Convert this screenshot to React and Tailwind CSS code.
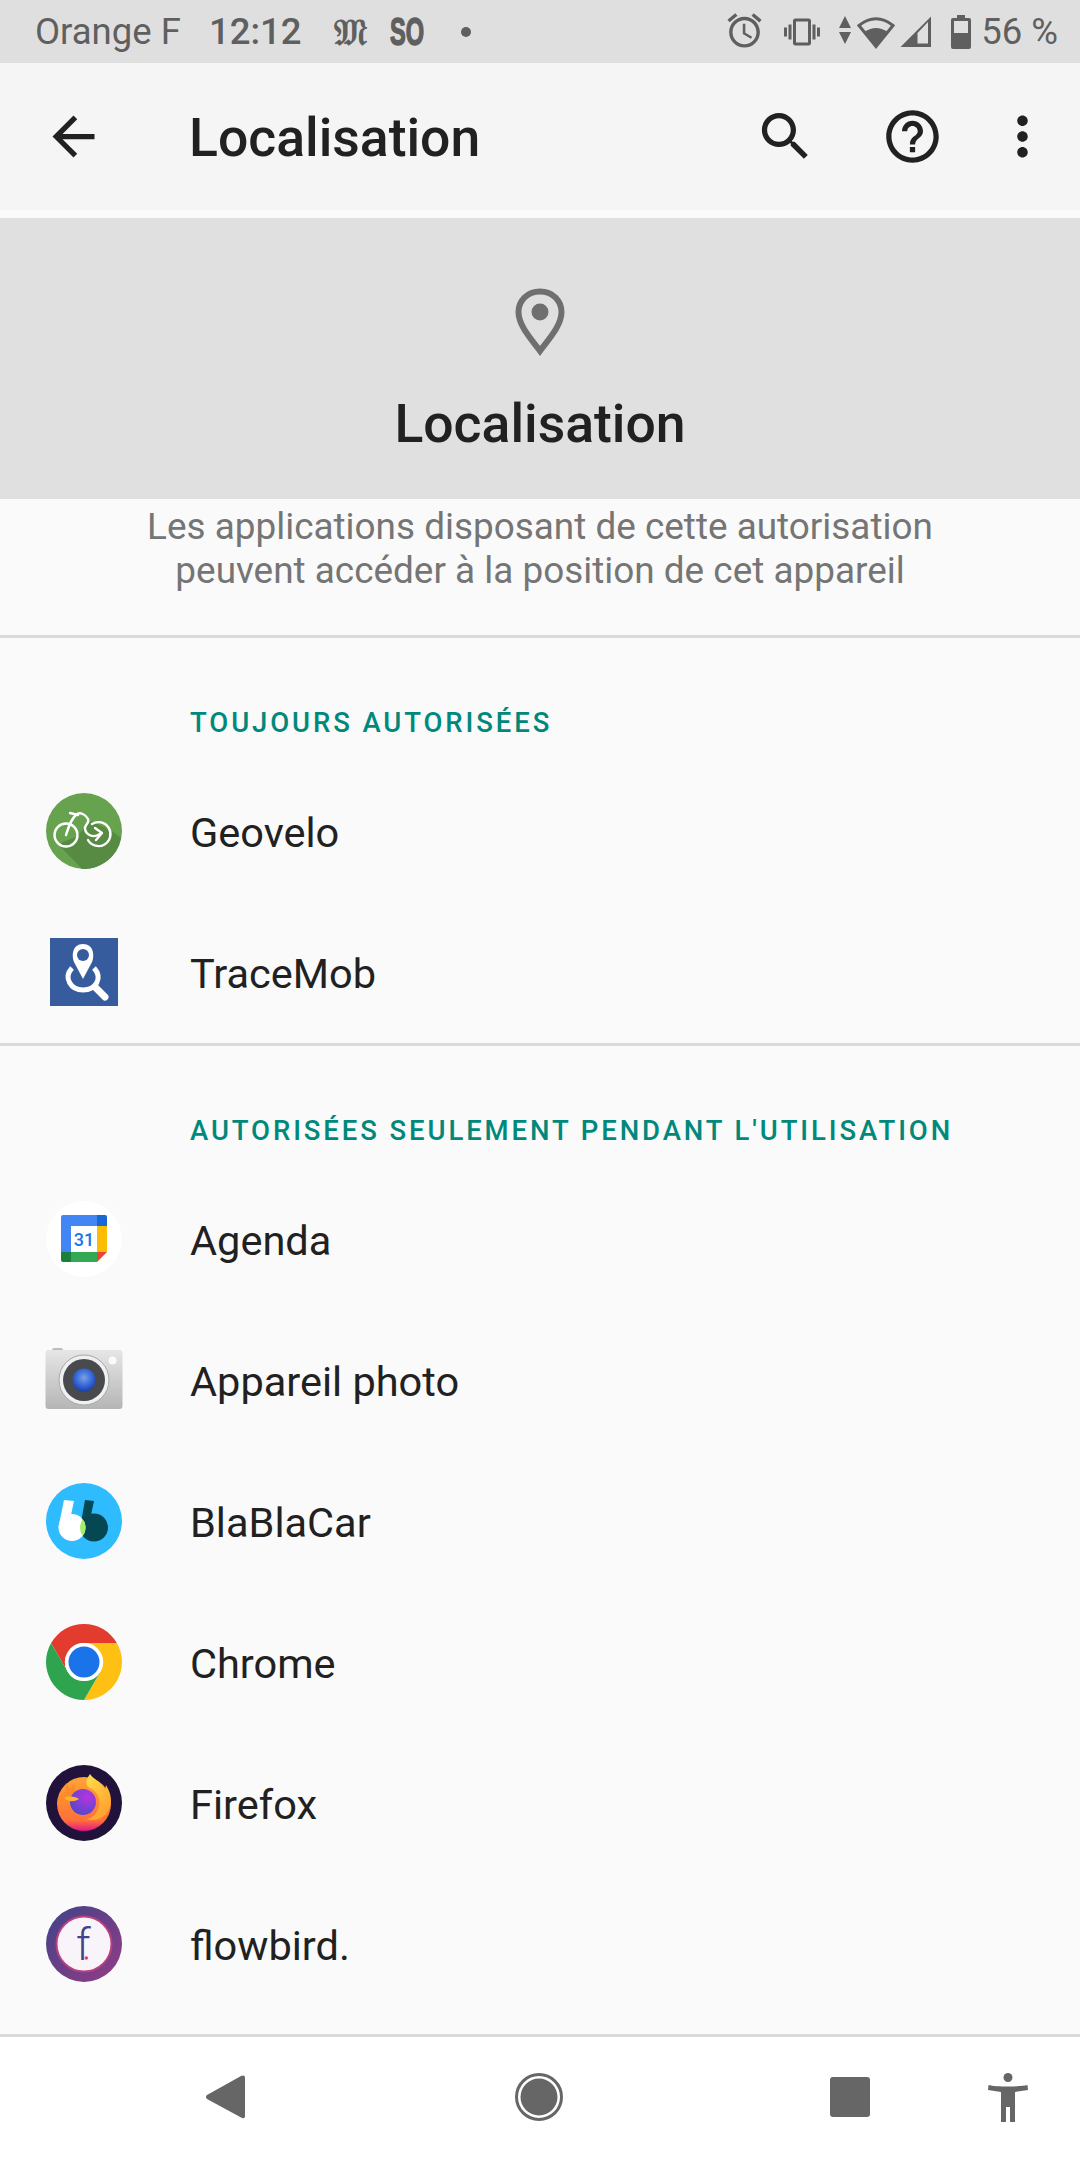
function MaterialIcon({ d, size = 63, className = '', fill = '#212121' }) {
  return (
    <svg width={size} height={size} viewBox="0 0 24 24" fill={fill} className={className}>
      <path d={d} />
    </svg>
  );
}

function StatusBar() {
  return (
    <div className="h-[63px] bg-[#dfdfdf] flex items-center text-[#5f5f5f] pl-[35px] pr-[22px]">
      <span className="text-[36.500px] leading-none w-[174px] pt-[2px]">Orange F</span>
      <span className="text-[36.500px] leading-none w-[125px] pt-[2px] font-medium">12:12</span>
      <span className="text-[36px] leading-none w-[56px] font-bold font-['DejaVu_Serif',serif]">𝔐</span>
      <span className="w-[71px] h-[38px] leading-[38px]">
        <span className="inline-block origin-left scale-x-[0.62] text-[38px] font-black [-webkit-text-stroke:1.500px_#5f5f5f] font-['Liberation_Sans',sans-serif]">SO</span>
      </span>
      <span className="w-[10px] h-[10px] rounded-full bg-[#5f5f5f]" />
      <div className="flex-1" />
      <MaterialIcon
        size={41}
        fill="#5f5f5f"
        className="mr-[19px] -mt-[2px]"
        d="M22 5.720l-4.600-3.860-1.290 1.530 4.600 3.860L22 5.720zM7.880 3.390L6.600 1.860 2 5.710l1.290 1.530 4.590-3.850zM12.500 8H11v6l4.750 2.850.75-1.230-4-2.370V8zM12 4c-4.970 0-9 4.030-9 9s4.030 9 9 9c4.970 0 9-4.030 9-9s-4.030-9-9-9zm0 16c-3.870 0-7-3.130-7-7s3.130-7 7-7 7 3.130 7 7-3.130 7-7 7z"
      />
      <MaterialIcon
        size={36}
        fill="#5f5f5f"
        className="mr-[19px]"
        d="M0 15h2V9H0v6zm3 2h2V7H3v10zm19-8v6h2V9h-2zm-3 8h2V7h-2v10zM16.500 3h-9C6.670 3 6 3.670 6 4.500v15c0 .83.67 1.500 1.500 1.500h9c.83 0 1.500-.67 1.500-1.500v-15c0-.83-.67-1.500-1.500-1.500zM16 19H8V5h8v14z"
      />
      <svg width="12" height="28" viewBox="0 0 12 28" className="mr-[6px] -mt-[4px]" fill="#5f5f5f">
        <path d="M6 0l6 12H0zM0 16h12L6 28z" />
      </svg>
      <svg width="38" height="34" viewBox="0 0 38 34" className="mr-[4px]">
        <path d="M19 31.500L2 10.500Q19 -3 36 10.500Z" fill="none" stroke="#5f5f5f" strokeWidth="3" />
        <path d="M19 32L7.500 17Q19 9 30.500 17Z" fill="#5f5f5f" />
      </svg>
      <svg width="33" height="33" viewBox="0 0 33 33" className="mr-[19px]" fill="#5f5f5f">
        <path d="M32 1.500V32H1.500Z" />
        <path d="M18.500 18V28.500H29V7Z" fill="#dfdfdf" />
      </svg>
      <svg width="20" height="34" viewBox="0 0 20 34" className="mr-[10px]">
        <path d="M6 0h8v3h4a2 2 0 0 1 2 2v27a2 2 0 0 1-2 2H2a2 2 0 0 1-2-2V5a2 2 0 0 1 2-2h4z" fill="#5f5f5f" />
        <rect x="3" y="6" width="14" height="12" fill="#dfdfdf" />
      </svg>
      <span className="text-[36.500px] leading-none pt-[2px]">56 %</span>
    </div>
  );
}

function AppBar() {
  return (
    <div className="h-[147px] bg-[#f5f5f5] flex items-center text-[#212121] pl-[42px] pr-[26px]">
      <MaterialIcon d="M20 11H7.830l5.590-5.590L12 4l-8 8 8 8 1.410-1.410L7.830 13H20v-2z" />
      <h1 className="ml-[84px] pt-[3px] text-[53.500px] font-medium leading-none">Localisation</h1>
      <div className="flex-1" />
      <MaterialIcon
        className="mr-[64px]"
        d="M15.500 14h-.79l-.28-.27C15.410 12.590 16 11.110 16 9.500 16 5.910 13.090 3 9.500 3S3 5.910 3 9.500 5.910 16 9.500 16c1.610 0 3.090-.59 4.230-1.570l.27.28v.79l5 4.990L20.490 19l-4.990-5zm-6 0C7.010 14 5 11.990 5 9.500S7.010 5 9.500 5 14 7.010 14 9.500 11.990 14 9.500 14z"
      />
      <MaterialIcon
        className="mr-[47px]"
        d="M11 18h2v-2h-2v2zm1-16C6.480 2 2 6.480 2 12s4.480 10 10 10 10-4.480 10-10S17.520 2 12 2zm0 18c-4.410 0-8-3.590-8-8s3.590-8 8-8 8 3.590 8 8-3.590 8-8 8zm0-14c-2.210 0-4 1.790-4 4h2c0-1.100.9-2 2-2s2 .9 2 2c0 2-3 1.750-3 5h2c0-2.250 3-2.500 3-5 0-2.210-1.790-4-4-4z"
      />
      <MaterialIcon d="M12 8c1.100 0 2-.9 2-2s-.9-2-2-2-2 .9-2 2 .9 2 2 2zm0 2c-1.100 0-2 .9-2 2s.9 2 2 2 2-.9 2-2-.9-2-2-2zm0 6c-1.100 0-2 .9-2 2s.9 2 2 2 2-.9 2-2-.9-2-2-2z" />
    </div>
  );
}

function Geovelo() {
  return (
    <svg width="76" height="76" viewBox="0 0 76 76">
      <circle cx="38" cy="38" r="38" fill="#67a34e" />
      <path d="M12 51L30 44L45 28L66 38L75 45A38 38 0 0 1 36 76Z" fill="#578a42" />
      <g fill="none" stroke="#fff" strokeWidth="2.400" strokeLinecap="round" strokeLinejoin="round">
        <circle cx="20" cy="42" r="11.500" />
        <path d="M46 31A12 12 0 1 1 42 47" />
        <path d="M20 42C23 33 25 26 30 22C34 18 40 22 42 26C44 30 38 32 39 36C40 41 46 46 54 41" />
        <path d="M24 20L32 22" />
        <path d="M49 35L56 40L50 47" />
      </g>
    </svg>
  );
}

function TraceMob() {
  return (
    <svg width="68" height="68" viewBox="0 0 68 68">
      <rect width="68" height="68" fill="#365c9e" />
      <path d="M33 6C22 6 21.500 18 24 24L33 41L42 24C44.500 18 44 6 33 6Z" fill="#fff" />
      <circle cx="33" cy="17" r="6" fill="#365c9e" />
      <path d="M22 30C13 40 21 52 33 52C46 52 53 40 44 30" fill="none" stroke="#fff" strokeWidth="5" />
      <path d="M46 50L55 59" stroke="#fff" strokeWidth="7" strokeLinecap="round" />
    </svg>
  );
}

function Agenda() {
  return (
    <svg width="76" height="76" viewBox="0 0 76 76">
      <circle cx="38" cy="38" r="38" fill="#fff" />
      <path d="M17 14H51V25H25V51H15V16a2 2 0 0 1 2-2Z" fill="#4285f4" />
      <path d="M51 14H59a2 2 0 0 1 2 2V25H51Z" fill="#1967d2" />
      <rect x="51" y="25" width="10" height="26" fill="#fbbc04" />
      <rect x="25" y="51" width="26" height="10" fill="#34a853" />
      <path d="M15 51H25V61H17a2 2 0 0 1-2-2Z" fill="#188038" />
      <path d="M51 51H61L51 61Z" fill="#ea4335" />
      <text x="38" y="44.500" textAnchor="middle" fontSize="18" fontWeight="500" fill="#1a73e8" fontFamily="Roboto, sans-serif">31</text>
    </svg>
  );
}

function Camera() {
  return (
    <svg width="78" height="62" viewBox="0 0 78 62" className="-mt-[2px]">
      <defs>
        <linearGradient id="camBody" x1="0" y1="0" x2="0" y2="1">
          <stop offset="0" stopColor="#e6e6e6" />
          <stop offset="1" stopColor="#b5b5b5" />
        </linearGradient>
        <radialGradient id="camLens" cx="0.500" cy="0.400" r="0.600">
          <stop offset="0" stopColor="#7f9fe0" />
          <stop offset="0.500" stopColor="#3f71dd" />
          <stop offset="1" stopColor="#1c3fae" />
        </radialGradient>
      </defs>
      <rect x="7" y="0" width="11" height="5" rx="2" fill="#bdbdbd" />
      <rect x="0.500" y="2" width="77" height="59" rx="3" fill="url(#camBody)" />
      <circle cx="39" cy="32" r="25" fill="#f0f0f0" stroke="#a8a8a8" strokeWidth="1" />
      <circle cx="39" cy="32" r="21" fill="#484a4d" />
      <circle cx="39" cy="32" r="11.500" fill="url(#camLens)" />
      <circle cx="67.500" cy="12.500" r="4" fill="#fafafa" />
    </svg>
  );
}

function BlaBlaCar() {
  return (
    <svg width="76" height="76" viewBox="0 0 76 76">
      <defs>
        <clipPath id="blaLeft">
          <circle cx="26" cy="44.500" r="13.500" />
        </clipPath>
      </defs>
      <circle cx="38" cy="38" r="38" fill="#2ebcff" />
      <circle cx="48" cy="44.500" r="14" fill="#054752" />
      <path d="M39 17L48 18L45 32L34.500 42Z" fill="#054752" />
      <circle cx="26" cy="44.500" r="13.500" fill="#fff" />
      <path d="M18 17L28 18L25 32L12.500 44Z" fill="#fff" />
      <circle cx="48" cy="44.500" r="14" fill="#a5ed6d" clipPath="url(#blaLeft)" />
    </svg>
  );
}

function Chrome() {
  return (
    <svg width="76" height="76" viewBox="0 0 76 76">
      <path d="M5.100 19A38 38 0 0 1 70.900 19H38A19 19 0 0 0 21.500 47.500Z" fill="#e33b2e" />
      <path d="M70.900 19A38 38 0 0 1 38 76L54.500 47.500A19 19 0 0 0 38 19Z" fill="#fdc013" />
      <path d="M5.100 19A38 38 0 0 0 38 76L54.500 47.500A19 19 0 0 1 21.500 47.500Z" fill="#2ea44f" />
      <circle cx="38" cy="38" r="19" fill="#fff" />
      <circle cx="38" cy="38" r="15.500" fill="#1a73e8" />
    </svg>
  );
}

function Firefox() {
  return (
    <svg width="76" height="76" viewBox="0 0 76 76">
      <defs>
        <linearGradient id="foxBody" x1="0.500" y1="0" x2="0.500" y2="1">
          <stop offset="0" stopColor="#ffa436" />
          <stop offset="0.800" stopColor="#ff7139" />
          <stop offset="1" stopColor="#e31587" />
        </linearGradient>
        <linearGradient id="foxTail" x1="0" y1="0" x2="0.600" y2="1">
          <stop offset="0" stopColor="#ffe04a" />
          <stop offset="1" stopColor="#ffa02e" />
        </linearGradient>
        <radialGradient id="foxGlobe" cx="0.650" cy="0.300" r="0.800">
          <stop offset="0" stopColor="#b833e1" />
          <stop offset="1" stopColor="#4a4bc8" />
        </radialGradient>
      </defs>
      <circle cx="38" cy="38" r="38" fill="#20123a" />
      <circle cx="38" cy="39" r="27" fill="url(#foxBody)" />
      <path d="M20 18L19 27C14 30 11 36 11 40L24 36L32 26C28 25 28 22 28 19L24 24Z" fill="#ff8a2b" />
      <circle cx="37" cy="37" r="13" fill="url(#foxGlobe)" />
      <path d="M44 9C38 17 40 22 46 24C54 29 56 40 50 48C47 53 42 54 40 54C52 58 65 50 65 36C65 28 62 24 60 20L59 25C57 18 48 15 44 9Z" fill="url(#foxTail)" />
      <path d="M18 33C22 31 28 31 33 34C29 37 22 37 18 33Z" fill="#ffb52e" />
    </svg>
  );
}

function Flowbird() {
  return (
    <svg width="76" height="76" viewBox="0 0 76 76">
      <defs>
        <linearGradient id="flowRing" x1="0" y1="0" x2="1" y2="1">
          <stop offset="0" stopColor="#3f4389" />
          <stop offset="1" stopColor="#943c85" />
        </linearGradient>
      </defs>
      <circle cx="38" cy="38" r="38" fill="url(#flowRing)" />
      <circle cx="38" cy="38" r="27.500" fill="#f8f4fa" stroke="#b8407f" strokeWidth="2" />
      <text x="30" y="54" fontSize="44" fontFamily="Roboto, sans-serif" fontWeight="300" fill="#3f4389">f</text>
      <circle cx="40.300" cy="52" r="1.800" fill="#e8348a" />
    </svg>
  );
}

function AppRow({ name, children }) {
  return (
    <div className="h-[141px] flex items-center">
      <div className="w-[190px] h-full pt-[32px] pl-[45px] shrink-0">
        <div className="w-[78px] h-[76px] flex items-center justify-center">{children}</div>
      </div>
      <span className="text-[41.500px] text-[#212121] leading-none pt-[3px]">{name}</span>
    </div>
  );
}

function SectionLabel({ children }) {
  return (
    <div className="pl-[190px] text-[27.500px] font-medium tracking-[2.900px] text-[#00897b] leading-[28px]">
      {children}
    </div>
  );
}

function NavBar() {
  return (
    <div className="h-[126px] bg-white border-t-[3px] border-[#dadada] flex items-center pl-[206px] pb-[3px]">
      <svg width="39" height="44" viewBox="0 0 39 44" className="mr-[270px]" fill="#666">
        <path d="M37 0.500a2 2 0 0 1 2 2V41.500a2 2 0 0 1-3 1.500L1 24a2.500 2.500 0 0 1 0-4L35 1Z" />
      </svg>
      <svg width="48" height="48" viewBox="0 0 48 48" className="mr-[267px]">
        <circle cx="24" cy="24" r="22.500" fill="none" stroke="#666" strokeWidth="3" />
        <circle cx="24" cy="24" r="18.500" fill="#666" />
      </svg>
      <div className="w-[40px] h-[40px] rounded-[3px] bg-[#666] mr-[118px]" />
      <svg width="40" height="49" viewBox="0 0 40 49" fill="#666">
        <ellipse cx="20" cy="4.500" rx="4.500" ry="4.500" />
        <path d="M0.500 12C8 14 32 14 39.500 12L40 17L27 19V49H22V34H18V49H13V19L0 17Z" />
      </svg>
    </div>
  );
}

export default function App() {
  return (
    <div className="w-[1080px] h-[2160px] bg-[#fafafa] flex flex-col overflow-hidden font-[Roboto,sans-serif]">
      <StatusBar />
      <AppBar />

      <div className="mt-[8px] h-[281px] bg-[#e0e0e0] flex flex-col items-center pt-[70px]">
        <svg width="50" height="69" viewBox="0 0 50 69">
          <path d="M25 3.500C12 3.500 3.500 13 3.500 24C3.500 38 17 52 25 63C33 52 46.500 38 46.500 24C46.500 13 38 3.500 25 3.500Z" fill="none" stroke="#6f6f6f" strokeWidth="6" />
          <circle cx="25" cy="24" r="8.500" fill="#6f6f6f" />
        </svg>
        <h2 className="mt-[37px] text-[53.500px] font-medium text-[#212121] leading-[60px]">Localisation</h2>
      </div>

      <div className="h-[139px] pt-[6px] text-center text-[36.900px] leading-[44px] text-[#757575] border-b-[3px] border-[#dadada]">
        <p>Les applications disposant de cette autorisation</p>
        <p>peuvent accéder à la position de cet appareil</p>
      </div>

      <div className="pt-[71px]">
        <SectionLabel>TOUJOURS AUTORISÉES</SectionLabel>
      </div>
      <div className="mt-[24px]">
        <AppRow name="Geovelo"><Geovelo /></AppRow>
        <AppRow name="TraceMob"><TraceMob /></AppRow>
      </div>

      <div className="border-t-[3px] border-[#dadada] pt-[71px]">
        <SectionLabel>AUTORISÉES SEULEMENT PENDANT L'UTILISATION</SectionLabel>
      </div>
      <div className="mt-[24px]">
        <AppRow name="Agenda"><Agenda /></AppRow>
        <AppRow name="Appareil photo"><Camera /></AppRow>
        <AppRow name="BlaBlaCar"><BlaBlaCar /></AppRow>
        <AppRow name="Chrome"><Chrome /></AppRow>
        <AppRow name="Firefox"><Firefox /></AppRow>
        <AppRow name="flowbird."><Flowbird /></AppRow>
      </div>

      <div className="flex-1" />
      <NavBar />
    </div>
  );
}
